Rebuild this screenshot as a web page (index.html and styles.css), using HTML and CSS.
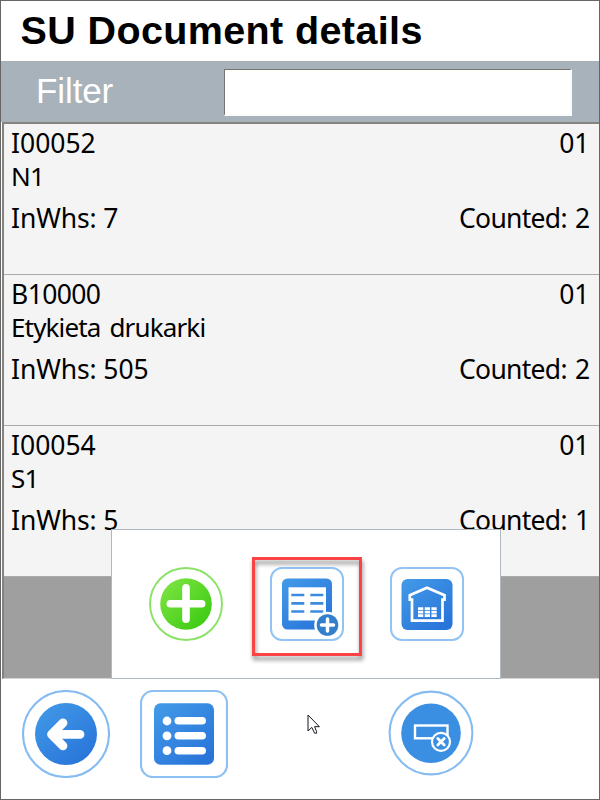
FILE: index.html
```
<!DOCTYPE html>
<html lang="en">
<head>
<meta charset="utf-8">
<title>SU Document details</title>
<link rel="stylesheet" href="styles.css">
</head>
<body>
<svg class="defs" width="0" height="0" aria-hidden="true">
  <defs>
    <linearGradient id="blue" x1="0" y1="0" x2="0.8" y2="1"><stop offset="0" stop-color="#439be8"/><stop offset="1" stop-color="#2874d9"/></linearGradient>
    <linearGradient id="green" x1="0" y1="0" x2="1" y2="1"><stop offset="0.1" stop-color="#7be341"/><stop offset="0.9" stop-color="#3ccb12"/></linearGradient>
  </defs>
</svg>
<div class="window">
  <header class="title">SU Document details</header>
  <div class="filter">
    <label class="filter-label" for="filter">Filter</label>
    <input class="filter-input" id="filter" type="text">
  </div>
  <main class="content">
    <section class="item">
      <div class="line"><span class="code">I00052</span><span class="num">01</span></div>
      <div class="line name"><span>N1</span></div>
      <div class="line stock"><span class="whs">InWhs: 7</span><span class="counted">Counted: 2</span></div>
    </section>
    <section class="item">
      <div class="line"><span class="code wide">B10000</span><span class="num">01</span></div>
      <div class="line name"><span>Etykieta drukarki</span></div>
      <div class="line stock"><span class="whs">InWhs: 505</span><span class="counted">Counted: 2</span></div>
    </section>
    <section class="item">
      <div class="line"><span class="code">I00054</span><span class="num">01</span></div>
      <div class="line name"><span>S1</span></div>
      <div class="line stock"><span class="whs">InWhs: 5</span><span class="counted">Counted: 1</span></div>
    </section>
    <div class="popup">
      <svg class="tool" viewBox="0 0 74 74">
        <circle cx="37" cy="37" r="36" fill="#fff" stroke="#8be265" stroke-width="1.9"/>
        <circle cx="37" cy="37" r="25.8" fill="url(#green)"/>
        <path d="M37 20.8V52.2M21.3 36.8H52.7" stroke="#fff" stroke-width="7.6" stroke-linecap="round"/>
      </svg>
      <svg class="tool" viewBox="0 0 74 74">
        <rect x="1" y="1" width="72" height="72" rx="11" fill="#fff" stroke="#91c4f3" stroke-width="2"/>
        <rect x="12" y="11.5" width="50" height="51" rx="5.5" fill="url(#blue)"/>
        <rect x="18.5" y="20.3" width="37.5" height="33.2" fill="#fff"/>
        <path d="M21.3 28H34.3M40.3 28H53.3M21.3 36.4H34.3M40.3 36.4H53.3M21.3 44.5H34.3M40.3 44.5H53.3" stroke="#3b8be1" stroke-width="2.6"/>
        <circle cx="57.5" cy="58" r="13.3" fill="#fff"/>
        <circle cx="57.5" cy="58" r="10.8" fill="#327fcb"/>
        <path d="M57.5 52V64M51.5 58H63.5" stroke="#fff" stroke-width="3.5" stroke-linecap="round"/>
      </svg>
      <svg class="tool" viewBox="0 0 74 74">
        <rect x="1" y="1" width="72" height="72" rx="11" fill="#fff" stroke="#91c4f3" stroke-width="2"/>
        <rect x="11.5" y="12" width="51" height="51" rx="6" fill="url(#blue)"/>
        <path d="M37 20.7L19.8 28.2V32.6H22V53.6H52.5V32.6H54.5V28.2Z" fill="none" stroke="#fff" stroke-width="2.7"/>
        <path d="M28 41.7H47M28 45.2H47M28 48.7H47" stroke="#fff" stroke-width="2.7" stroke-dasharray="5.3 1.4"/>
      </svg>
    </div>
    <div class="highlight"></div>
  </main>
  <footer class="toolbar">
    <svg class="back" viewBox="0 0 88 88">
      <circle cx="44" cy="44" r="43" fill="#fff" stroke="#86bcf1" stroke-width="2.1"/>
      <circle cx="44" cy="44" r="31" fill="url(#blue)"/>
      <path d="M58 44.4H31M41 32.8L29.5 44.3L41 55.8" fill="none" stroke="#fff" stroke-width="8.8" stroke-linecap="round" stroke-linejoin="round"/>
    </svg>
    <svg class="list" viewBox="0 0 88 88">
      <rect x="1" y="1" width="86" height="86" rx="12" fill="#fff" stroke="#8cc0f2" stroke-width="2.2"/>
      <rect x="14" y="13.3" width="60" height="61.4" rx="6.5" fill="url(#blue)"/>
      <g fill="#fff">
        <circle cx="27" cy="31" r="4.4"/><rect x="34.5" y="27" width="31.5" height="7.6" rx="3.8"/>
        <circle cx="27" cy="45.8" r="4.4"/><rect x="34.5" y="42" width="31.5" height="7.6" rx="3.8"/>
        <circle cx="27" cy="60.7" r="4.4"/><rect x="34.5" y="57" width="31.5" height="7.6" rx="3.8"/>
      </g>
    </svg>
    <svg class="clear" viewBox="0 0 86 86">
      <circle cx="43" cy="43" r="41.4" fill="#fff" stroke="#86bcf1" stroke-width="2.1"/>
      <circle cx="43" cy="43.2" r="29.8" fill="#3b8fe2"/>
      <rect x="27" y="35.5" width="32.5" height="12.8" fill="none" stroke="#fff" stroke-width="2.4"/>
      <circle cx="53" cy="51.8" r="9" fill="#3b8fe2" stroke="#fff" stroke-width="2.2"/>
      <path d="M49.8 48.6L56.2 55M56.2 48.6L49.8 55" stroke="#fff" stroke-width="2.8" stroke-linecap="round"/>
    </svg>
  </footer>
  <svg class="cursor" viewBox="0 0 14 21">
    <path d="M1 1V17L4.8 13.4L7.6 19.2H9.6V17.6L7.6 12.7H12.4Z" fill="#fff" stroke="#15151f" stroke-width="1"/>
  </svg>
</div>
</body>
</html>
```
FILE: styles.css
```
* { box-sizing: border-box; }
body { margin: 0; background: #fff; }
.defs { position: absolute; }
.window {
  position: relative;
  display: flex;
  flex-direction: column;
  width: 600px;
  height: 800px;
  border: 1px solid #676667;
  background: #fff;
  overflow: hidden;
}
.title {
  height: 60px;
  padding-left: 19.5px;
  font: bold 39.5px/58px "Liberation Sans", Arial, sans-serif;
  letter-spacing: 0.38px;
  white-space: nowrap;
  color: #000;
}
.filter {
  display: flex;
  align-items: flex-start;
  height: 61px;
  padding-top: 8px;
  background: #a8b2ba;
}
.filter-label {
  width: 223px;
  padding-left: 35px;
  font: 35px/43px "Liberation Sans", Arial, sans-serif;
  letter-spacing: -0.1px;
  color: #fff;
}
.filter-input {
  width: 348px;
  height: 47px;
  padding: 0 6px;
  border: 2px solid;
  border-color: #77736f #fbfbfa #fbfbfa #77736f;
  border-width: 1.5px 2px 2px 1.5px;
  background: #fff;
  font: 28px "Liberation Sans", Arial, sans-serif;
  outline: none;
}
.content {
  position: relative;
  height: 557px;
  margin-left: 1px;
  border-top: 2px solid #85837f;
  border-left: 2px solid #85837f;
  border-bottom: 1px solid #d5d5d5;
  background: #9f9f9f;
}
.item {
  height: 151px;
  padding: 3px 9.5px 0 7px;
  border-bottom: 1px solid #aaa;
  background: #f4f4f4;
  font: 26.5px/32px "Noto Sans", Tahoma, sans-serif;
  color: #000;
}
.line {
  display: flex;
  justify-content: space-between;
  height: 32px;
  white-space: nowrap;
}
.wide { letter-spacing: -0.6px; }
.name {
  height: 31px;
  margin-top: 1px;
  font-size: 26px;
  letter-spacing: -0.85px;
  word-spacing: 3px;
}
.whs { letter-spacing: -0.1px; }
.counted { letter-spacing: -0.7px; word-spacing: 2px; }
.stock { margin-top: 11px; }
.popup {
  position: absolute;
  left: 107px;
  top: 405px;
  display: flex;
  gap: 46.5px;
  width: 390px;
  height: 150px;
  padding: 37px 0 0 37px;
  border: 1px solid #b0b9c1;
  background: #fff;
}
.tool { width: 74px; height: 74px; flex: none; }
.highlight {
  position: absolute;
  left: 248px;
  top: 433px;
  width: 110px;
  height: 99px;
  border: 3px solid #fb4346;
  filter: drop-shadow(1px 4px 2px rgba(0, 0, 0, 0.45));
}
.toolbar {
  display: flex;
  align-items: flex-start;
  height: 120px;
  padding: 11px 0 0 21px;
}
.back { width: 88px; height: 88px; }
.list { width: 88px; height: 88px; margin-left: 30px; }
.clear { width: 86px; height: 86px; margin-left: 160px; }
.cursor {
  position: absolute;
  left: 306px;
  top: 713px;
  width: 14px;
  height: 21px;
}
```
